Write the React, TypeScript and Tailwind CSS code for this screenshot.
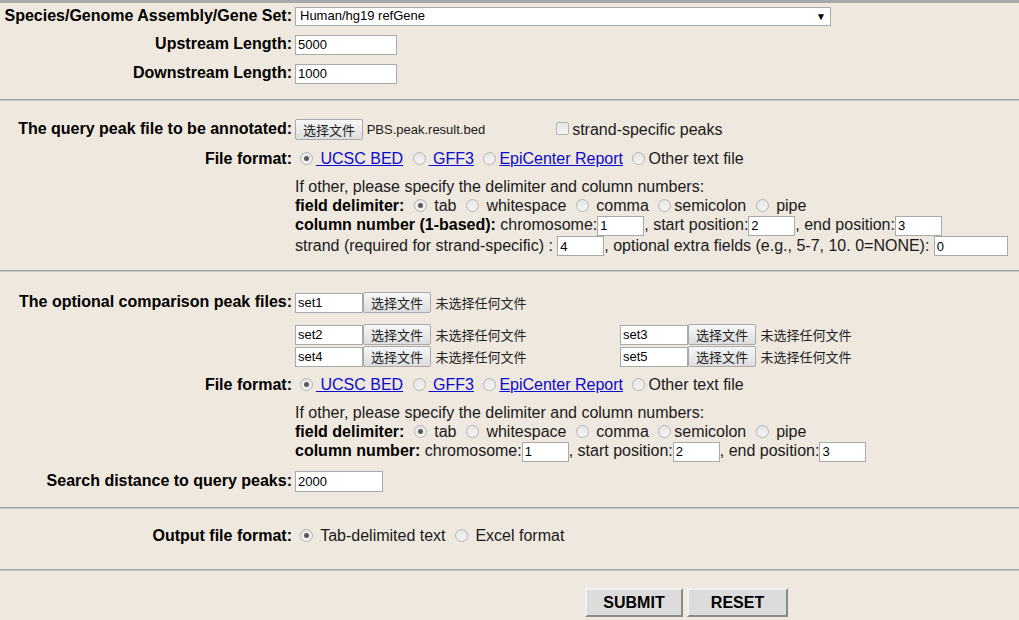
import React from "react";

const Radio = ({ checked = false }: { checked?: boolean }) => (
  <span className="relative inline-block align-[-1px] w-[13px] h-[13px] rounded-full border border-[#b4b4b4] bg-gradient-to-b from-[#e6e6e6] to-[#f4f4f4] ml-[5px] mr-[3px]">
    {checked && <span className="absolute left-[3px] top-[3px] w-[5px] h-[5px] rounded-full bg-[#5a5a5a]" />}
  </span>
);

const Checkbox = () => (
  <span className="inline-block align-[-1px] w-[13px] h-[13px] rounded-[2px] border border-[#b4b4b4] bg-gradient-to-b from-[#e6e6e6] to-[#f4f4f4] ml-[4px] mr-[3px]" />
);

const TextInput = ({ value, w, h = 20 }: { value: string; w: string; h?: number }) => (
  <input
    readOnly
    defaultValue={value}
    className={`${w} ${h === 21 ? "h-[21px]" : "h-[20px]"} inline-block align-middle border border-[#a9a9a9] bg-white px-[2px] text-[13px] text-black outline-none`}
    style={{ fontFamily: '"Liberation Sans", Arial, sans-serif' }}
  />
);

const FileButton = () => (
  <span
    className="inline-block align-middle h-[21px] px-[7px] border border-[#a9a9a9] rounded-[2px] bg-gradient-to-b from-[#f7f7f7] to-[#dddddd] text-[13px] leading-[19px] text-[#222]"
    style={{ fontFamily: '"Noto Sans CJK SC", "Liberation Sans", sans-serif' }}
  >
    选择文件
  </span>
);

const NoFile = () => (
  <span
    className="text-[13px] text-[#222] align-middle"
    style={{ fontFamily: '"Noto Sans CJK SC", "Liberation Sans", sans-serif' }}
  >
    未选择任何文件
  </span>
);

const Link = ({ children }: { children: React.ReactNode }) => (
  <a className="text-[#0b0bcc] underline cursor-pointer">{children}</a>
);

const Row = ({
  label,
  h,
  children,
}: {
  label?: string;
  h: string;
  children?: React.ReactNode;
}) => (
  <div className={`flex items-center ${h}`}>
    <div className="w-[292px] shrink-0 text-right font-bold text-black whitespace-nowrap">{label}</div>
    <div className="pl-[3px] whitespace-nowrap">{children}</div>
  </div>
);

const Hr = () => (
  <div className="w-full border-t border-[#a2a2a2] border-b border-b-[#cbc6be]" />
);

const Line = ({ h, children }: { h: string; children: React.ReactNode }) => (
  <div className={`flex items-center ${h} whitespace-nowrap`}>
    <div>{children}</div>
  </div>
);

const FileFormat = () => (
  <>
    <Radio checked />
    <Link>{"\u00a0UCSC BED"}</Link> <Radio />
    <Link>{"\u00a0GFF3"}</Link> <Radio />
    <Link>EpiCenter Report</Link> <Radio />
    Other text file
  </>
);

export default function App() {
  return (
    <div
      className="w-[1019px] h-[620px] overflow-hidden bg-[#efe8df] text-[16px] text-[#1a1a1a]"
      style={{ fontFamily: '"Liberation Sans", Arial, Helvetica, sans-serif' }}
    >
      <div className="h-[3px] bg-[#a9a9a9]" />

      {/* Section 1 */}
      <Row label="Species/Genome Assembly/Gene Set:" h="h-[26px]">
        <div className="relative flex items-center w-[536px] h-[19px] border border-[#a9a9a9] bg-white text-[13px] text-black pl-[4px]">
          Human/hg19 refGene
          <span className="absolute right-[4px] top-[3px] text-[10px] leading-[12px]">▼</span>
        </div>
      </Row>
      <Row label="Upstream Length:" h="h-[30px]">
        <TextInput value="5000" w="w-[102px]" />
      </Row>
      <Row label="Downstream Length:" h="h-[28px]">
        <TextInput value="1000" w="w-[102px]" />
      </Row>
      <div className="h-[12px]" />
      <Hr />

      {/* Section 2 */}
      <div className="h-[16px]" />
      <Row label="The query peak file to be annotated:" h="h-[24px]">
        <FileButton />
        <span className="text-[13px] align-middle"> PBS.peak.result.bed</span>
        <span className="inline-block w-[67px]" />
        <Checkbox />
        <span className="align-middle">strand-specific peaks</span>
      </Row>
      <div className="h-[6px]" />
      <Row label="File format:" h="h-[24px]">
        <FileFormat />
      </Row>
      <div className="h-[6px]" />
      <div className="pl-[295px]">
        <Line h="h-[19px]">If other, please specify the delimiter and column numbers:</Line>
        <Line h="h-[19px]">
          <b className="text-black">field delimiter:</b> <Radio checked /> tab <Radio /> whitespace <Radio /> comma <Radio />
          semicolon <Radio /> pipe
        </Line>
        <Line h="h-[20px]">
          <b className="text-black">column number (1-based):</b> chromosome:
          <TextInput value="1" w="w-[47px]" />, start position:
          <TextInput value="2" w="w-[47px]" />, end position:
          <TextInput value="3" w="w-[47px]" />
        </Line>
        <Line h="h-[21px]">
          strand (required for strand-specific) : <TextInput value="4" w="w-[47px]" />, optional extra fields (e.g., 5-7,
          10. 0=NONE): <TextInput value="0" w="w-[74px]" />
        </Line>
      </div>
      <div className="h-[14px]" />
      <Hr />

      {/* Section 3 */}
      <div className="h-[19px]" />
      <Row label="The optional comparison peak files:" h="h-[22px]">
        <TextInput value="set1" w="w-[68px]" />
        <FileButton /> <NoFile />
      </Row>
      <div className="h-[10px]" />
      <Row h="h-[22px]">
        <span className="inline-block w-[325px]">
          <TextInput value="set2" w="w-[68px]" />
          <FileButton /> <NoFile />
        </span>
        <TextInput value="set3" w="w-[68px]" />
        <FileButton /> <NoFile />
      </Row>
      <Row h="h-[22px]">
        <span className="inline-block w-[325px]">
          <TextInput value="set4" w="w-[68px]" />
          <FileButton /> <NoFile />
        </span>
        <TextInput value="set5" w="w-[68px]" />
        <FileButton /> <NoFile />
      </Row>
      <div className="h-[6px]" />
      <Row label="File format:" h="h-[24px]">
        <FileFormat />
      </Row>
      <div className="h-[6px]" />
      <div className="pl-[295px]">
        <Line h="h-[19px]">If other, please specify the delimiter and column numbers:</Line>
        <Line h="h-[19px]">
          <b className="text-black">field delimiter:</b> <Radio checked /> tab <Radio /> whitespace <Radio /> comma <Radio />
          semicolon <Radio /> pipe
        </Line>
        <Line h="h-[20px]">
          <b className="text-black">column number:</b> chromosome:
          <TextInput value="1" w="w-[47px]" />, start position:
          <TextInput value="2" w="w-[47px]" />, end position:
          <TextInput value="3" w="w-[47px]" />
        </Line>
      </div>
      <div className="h-[8px]" />
      <Row label="Search distance to query peaks:" h="h-[23px]">
        <TextInput value="2000" w="w-[88px]" h={21} />
      </Row>
      <div className="h-[15px]" />
      <Hr />

      {/* Section 4 */}
      <div className="h-[15px]" />
      <Row label="Output file format:" h="h-[24px]">
        <Radio checked /> Tab-delimited text <Radio /> Excel format
      </Row>
      <div className="h-[21px]" />
      <Hr />

      <div className="h-[17px]" />
      <div className="flex gap-[4px] pl-[585px]">
        <button className="w-[98px] h-[29px] bg-[#dcdcdc] border-2 border-t-[#f2f2f2] border-l-[#f2f2f2] border-r-[#8a8a8a] border-b-[#8a8a8a] font-bold text-[16px] text-black">
          SUBMIT
        </button>
        <button className="w-[101px] h-[29px] bg-[#dcdcdc] border-2 border-t-[#f2f2f2] border-l-[#f2f2f2] border-r-[#8a8a8a] border-b-[#8a8a8a] font-bold text-[16px] text-black">
          RESET
        </button>
      </div>
    </div>
  );
}
